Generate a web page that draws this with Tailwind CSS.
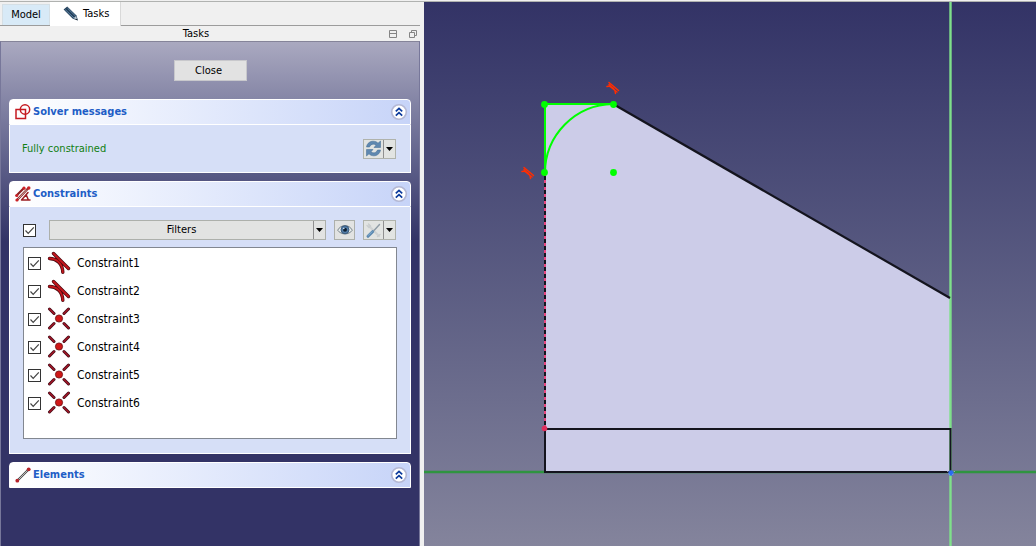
<!DOCTYPE html>
<html lang="en">
<head>
<meta charset="utf-8">
<meta name="viewport" content="width=device-width, initial-scale=1">
<title>Sketcher tasks</title>
<script src="https://cdn.jsdelivr.net/npm/@tailwindcss/browser@4"></script>
</head>
<body class="flex h-screen flex-col overflow-hidden bg-[#f0f0f0] font-['DejaVu_Sans_Condensed','DejaVu_Sans',sans-serif] text-[11px] leading-4 text-black">

<svg class="hidden" aria-hidden="true">
  <symbol id="check" viewBox="0 0 13 13"><path d="M2.500 6.500 5.200 9.300 10.800 3.400" fill="none" stroke="#444" stroke-width="1.200"/></symbol>
  <symbol id="down" viewBox="0 0 7 4"><path d="M0 0H7L3.500 4Z" fill="#000"/></symbol>
  <symbol id="collapse" viewBox="0 0 18 18">
    <circle cx="9" cy="9" r="7.300" fill="#fff" stroke="#b4b8d4" stroke-width="1.600"/>
    <path d="M5.800 8.400 9 5.400l3.200 3M5.800 12.600 9 9.600l3.200 3" fill="none" stroke="#0c3b9c" stroke-width="1.700"/>
  </symbol>
  <symbol id="tangent" viewBox="0 0 24 24">
    <g fill="none" stroke-linecap="round">
      <path d="M2.500 7.500C9 7.500 15.500 12 15.800 21.200M6.500 2.500 21.500 17.500" stroke="#4a0a10" stroke-width="3.400"/>
      <path d="M2.500 7.500C9 7.500 15.500 12 15.800 21.200M6.500 2.500 21.500 17.500" stroke="#c4161c" stroke-width="1.900"/>
    </g>
  </symbol>
  <symbol id="coincident" viewBox="0 0 24 24">
    <g fill="none" stroke-linecap="round">
      <path d="M2.500 2 7 6.500M21.500 2 17 6.500M2.500 21 7 16.500M21.500 21 17 16.500" stroke="#45101a" stroke-width="3"/>
      <path d="M2.500 2 7 6.500M21.500 2 17 6.500M2.500 21 7 16.500M21.500 21 17 16.500" stroke="#a31526" stroke-width="1.500"/>
    </g>
    <circle cx="12" cy="11.500" r="3.600" fill="#cf1717" stroke="#6b0e12" stroke-width=".8"/>
  </symbol>
</svg>

<div class="h-[2px] shrink-0 border-b border-[#b0b2b0]"></div>

<div class="flex min-h-0 grow">
  <aside class="flex w-[420px] shrink-0 flex-col">
    <div role="tablist" class="flex h-6 shrink-0 items-end border-b border-[#9c9c9c] pl-[2px]">
      <button role="tab" aria-selected="false" class="h-[21px] w-[48px] border border-b-0 border-[#d5dfe5] bg-[#d8eaf7]">Model</button>
      <button role="tab" aria-selected="true" class="-mb-px flex h-6 w-[71px] items-center gap-1 border-r border-[#d9d9d9] bg-white pl-[13px]">
        <svg class="size-4" viewBox="0 0 16 16" aria-hidden="true"><path d="M.6 3.500 4.200.5 13.500 9.500 15 14.500 9.800 12.800Z" fill="#26425d"/><path d="M2.200 3.600 11 12M4.500 2.200 12.500 10" stroke="#5e84a3" stroke-width="1"/><path d="m10.500 12.300 2.600-2.400 1 3.700Z" fill="#b9c8d2"/><path d="m13.300 12.700 1.200 1.600-2-.6Z" fill="#111"/></svg>
        Tasks
      </button>
    </div>
    <div class="flex h-[15px] shrink-0 items-center">
      <span class="grow pl-1 text-center">Tasks</span>
      <div class="flex gap-2.5 pr-0.5">
        <button aria-label="Minimize"><svg class="size-[10px]" viewBox="0 0 10 10" fill="none" stroke="#858585"><path d="M1.500 1.500h7v7h-7zM1.500 4.500h7"/></svg></button>
        <button aria-label="Float"><svg class="size-[10px]" viewBox="0 0 10 10" fill="none" stroke="#858585"><path d="M3.500 3.500v-2h5v5h-2M1.500 3.500h5v5h-5z"/></svg></button>
      </div>
    </div>

    <main class="flex grow flex-col border-x border-t border-x-[#77779a] border-t-[#858499] bg-[#333366] bg-linear-to-b from-[#aaa9c0] to-[#333366] to-[200px] px-2 pt-[18px]">
      <button class="mb-[18px] h-[21px] w-[73px] shrink-0 self-center border border-[#c8c8cc] bg-[#e2e2e2] pr-[3px] leading-[18px]">Close</button>

      <section class="mb-2 shrink-0">
        <header class="flex h-[26px] items-center rounded-t-[4px] border border-white bg-linear-to-r from-white to-[#c7d4f8] pr-[2px] pl-[5px]">
          <svg class="size-4" viewBox="0 0 16 16" fill="none" stroke="#c51a20" stroke-width="1.500" aria-hidden="true"><path d="M1 5.500h9.500V14.500H1z"/><circle cx="10" cy="5.500" r="4.700"/></svg>
          <h2 class="grow pl-[2px] font-bold text-[#215dc6]">Solver messages</h2>
          <button aria-label="Collapse solver messages"><svg class="size-[18px]"><use href="#collapse"/></svg></button>
        </header>
        <div class="flex h-12 items-center border border-t-0 border-white bg-[#d6dff7] pr-[14px] pl-3">
          <p class="grow text-[#118011]">Fully constrained</p>
          <div class="flex h-5 border border-[#b0b3ac] bg-[#e2e4e2]">
            <button aria-label="Update" class="px-px"><svg class="size-[17px]" viewBox="0 0 17 17" aria-hidden="true"><g fill="#5f88b0" stroke="#3f6890" stroke-width=".5"><path d="M1.500 7C2 3 5.500 1 8.500 1.200c2 .1 3.500.9 4.500 2L15.500 1v6.500H9L11 5.200C9.500 3.700 6 3.500 4.500 7Z"/><path d="M15.500 10c-.5 4-4 6-7 5.800-2-.1-3.500-.9-4.500-2L1.500 16V9.500H8l-2 2.300c1.500 1.500 5 1.700 6.500-1.800Z"/></g></svg></button>
            <button aria-label="Update options" class="flex w-3 items-center justify-center border-l border-[#909090]"><svg class="h-1 w-[7px]"><use href="#down"/></svg></button>
          </div>
        </div>
      </section>

      <section class="mb-2 shrink-0">
        <header class="flex h-[26px] items-center rounded-t-[4px] border border-white bg-linear-to-r from-white to-[#c7d4f8] pr-[2px] pl-[5px]">
          <svg class="size-4" viewBox="0 0 16 16" aria-hidden="true"><g fill="none" stroke-linecap="round"><path d="M1.500 9.500 9 2M2 14 13 2.500" stroke="#8a2020" stroke-width="2.200"/><path d="M3.500 12.500 11.500 4" stroke="#d9c9c4" stroke-width=".9"/><path d="M6.500 14 13 6.500M6.500 14H15M11.500 9.500l1.700 4" stroke="#9b1d22" stroke-width="1.500"/></g><g fill="#cc2226"><circle cx="9" cy="2.200" r="1.600"/><circle cx="13.800" cy="2" r="1.700"/><circle cx="1.800" cy="9.500" r="1.500"/><circle cx="2" cy="14" r="1.600"/></g></svg>
          <h2 class="grow pl-[2px] font-bold text-[#215dc6]">Constraints</h2>
          <button aria-label="Collapse constraints"><svg class="size-[18px]"><use href="#collapse"/></svg></button>
        </header>
        <div class="border border-t-0 border-white bg-[#d6dff7] px-[13px] pt-[13px] pb-[14px]">
          <div class="flex h-5 items-center pr-px">
            <label class="relative block size-[13px]"><input type="checkbox" checked aria-label="Toggle all constraints" class="block size-[13px] appearance-none border border-[#333] bg-white"><svg class="pointer-events-none absolute inset-0 size-[13px]"><use href="#check"/></svg></label>
            <div class="ml-[13px] flex h-5 grow border border-[#adb0ab] bg-[#e2e3e2]">
              <button class="grow">Filters</button>
              <button aria-label="Filter options" class="flex w-3 items-center justify-center border-l border-[#909090]"><svg class="h-1 w-[7px]"><use href="#down"/></svg></button>
            </div>
            <button aria-label="Show or hide constraints" class="ml-2 flex h-5 w-[21px] items-center justify-center border border-[#adb0ab] bg-[#e2e3e2]"><svg class="size-4" viewBox="0 0 16 16" aria-hidden="true"><path d="M.7 8.200C4 2 12 2 15.300 8.200 12 13.200 4 13.200.7 8.200Z" fill="#e9eded" stroke="#77838a"/><circle cx="8" cy="7.800" r="4" fill="#567fa9" stroke="#2b4d70" stroke-width=".8"/><circle cx="8" cy="7.800" r="2" fill="#0e2033"/><circle cx="6.800" cy="6.500" r=".8" fill="#d8e8f4"/></svg></button>
            <div class="ml-2 flex h-5 border border-[#b0b3ac] bg-[#e2e4e2]">
              <button aria-label="Settings" class="px-px"><svg class="size-[17px]" viewBox="0 0 17 17" fill="none" stroke-linecap="round" aria-hidden="true"><path d="M4 4 14 14" stroke="#cfd2d3" stroke-width="2.200"/><path d="M2 3.500 4 5.500 5.500 4 3.500 2M12.500 14.500 15 12.500" stroke="#c9cdce" stroke-width="1.400"/><path d="M9 8.500 14.500 2.500" stroke="#8e9ba5" stroke-width="1.400"/><path d="M3 14.300 7.600 9.700" stroke="#5b88b0" stroke-width="3"/><path d="M3.200 13.500 7 9.700" stroke="#8bb4d6" stroke-width=".9"/></svg></button>
              <button aria-label="Settings options" class="flex w-3 items-center justify-center border-l border-[#909090]"><svg class="h-1 w-[7px]"><use href="#down"/></svg></button>
            </div>
          </div>
          <ul class="mt-[7px] flex flex-col border border-[#828790] bg-white pt-[1px] pb-[21px] pl-1 text-[12px]">
            <li><label class="relative flex h-7 items-center"><input type="checkbox" checked class="size-[13px] appearance-none border border-[#333] bg-white"><svg class="pointer-events-none absolute left-0 size-[13px]"><use href="#check"/></svg><svg class="mr-[6px] ml-[6px] size-6"><use href="#tangent"/></svg>Constraint1</label></li>
            <li><label class="relative flex h-7 items-center"><input type="checkbox" checked class="size-[13px] appearance-none border border-[#333] bg-white"><svg class="pointer-events-none absolute left-0 size-[13px]"><use href="#check"/></svg><svg class="mr-[6px] ml-[6px] size-6"><use href="#tangent"/></svg>Constraint2</label></li>
            <li><label class="relative flex h-7 items-center"><input type="checkbox" checked class="size-[13px] appearance-none border border-[#333] bg-white"><svg class="pointer-events-none absolute left-0 size-[13px]"><use href="#check"/></svg><svg class="mr-[6px] ml-[6px] size-6"><use href="#coincident"/></svg>Constraint3</label></li>
            <li><label class="relative flex h-7 items-center"><input type="checkbox" checked class="size-[13px] appearance-none border border-[#333] bg-white"><svg class="pointer-events-none absolute left-0 size-[13px]"><use href="#check"/></svg><svg class="mr-[6px] ml-[6px] size-6"><use href="#coincident"/></svg>Constraint4</label></li>
            <li><label class="relative flex h-7 items-center"><input type="checkbox" checked class="size-[13px] appearance-none border border-[#333] bg-white"><svg class="pointer-events-none absolute left-0 size-[13px]"><use href="#check"/></svg><svg class="mr-[6px] ml-[6px] size-6"><use href="#coincident"/></svg>Constraint5</label></li>
            <li><label class="relative flex h-7 items-center"><input type="checkbox" checked class="size-[13px] appearance-none border border-[#333] bg-white"><svg class="pointer-events-none absolute left-0 size-[13px]"><use href="#check"/></svg><svg class="mr-[6px] ml-[6px] size-6"><use href="#coincident"/></svg>Constraint6</label></li>
          </ul>
        </div>
      </section>

      <section class="shrink-0">
        <header class="flex h-[26px] items-center rounded-t-[4px] border border-white bg-linear-to-r from-white to-[#c7d4f8] pr-[2px] pl-[5px]">
          <svg class="size-4" viewBox="0 0 16 16" aria-hidden="true"><path d="M2 14 14 2" stroke="#444" stroke-width="2.200"/><path d="M2 14 14 2" stroke="#c8c8c8" stroke-width=".9"/><circle cx="2.300" cy="13.700" r="1.900" fill="#b52229"/><circle cx="13.700" cy="2.300" r="1.900" fill="#b52229"/></svg>
          <h2 class="grow pl-[2px] font-bold text-[#215dc6]">Elements</h2>
          <button aria-label="Collapse elements"><svg class="size-[18px]"><use href="#collapse"/></svg></button>
        </header>
      </section>
    </main>
  </aside>

  <div class="w-1 shrink-0 bg-[#f0f0f0]"></div>

  <!-- 3D view: origin of the drawing is the top left corner of the view -->
  <div class="min-w-0 grow bg-linear-to-b from-[#333366] to-[#84849c]">
    <svg class="block size-full" role="img" aria-label="Sketch view">
      <line x1="0" y1="470" x2="100%" y2="470" stroke="#2f9440" stroke-width="2.400"/>
      <path d="M121 102H189L526 296V470H121Z" fill="#cccce8"/>
      <path d="M526.500 0V600" stroke="#7fe08a" stroke-width="2.400"/>
      <path d="M190 102.500 526 296" stroke="#14141e" stroke-width="2.200"/>
      <path d="M121 427H526.500V470H121Z" fill="none" stroke="#14141e" stroke-width="2"/>
      <path d="M121 171V426" stroke="#e8447f" stroke-width="2"/>
      <path d="M121 174V426" stroke="#14141e" stroke-width="2" stroke-dasharray="4 3"/>
      <circle cx="120.500" cy="426.500" r="2.800" fill="#e0305c"/>
      <path d="M121 171V102H189A69 69 0 0 0 121 171" fill="none" stroke="#00ff00" stroke-width="2"/>
      <g fill="#00ff00"><circle cx="120.500" cy="102.500" r="3.400"/><circle cx="189.500" cy="102.500" r="3.400"/><circle cx="120.500" cy="170.500" r="3.400"/><circle cx="189.500" cy="170.500" r="3.400"/></g>
      <g fill="none" stroke="#ff2d00" stroke-width="1.500" stroke-linecap="round">
        <path id="tan" d="M185 80.500 194.500 88.500M183 84.500C187 83.500 191.500 87 191.500 91.500M185 82.500 192 89.500M186 84.500 193 90"/>
        <use href="#tan" x="-85" y="85"/>
      </g>
      <circle cx="527" cy="471" r="2.700" fill="#2b6cf0"/>
      <path d="M523.500 469 526 474M530.500 469 528 474" stroke="#b8c6e8" stroke-width="1" stroke-dasharray="1 2"/>
    </svg>
  </div>
</div>
</body>
</html>
